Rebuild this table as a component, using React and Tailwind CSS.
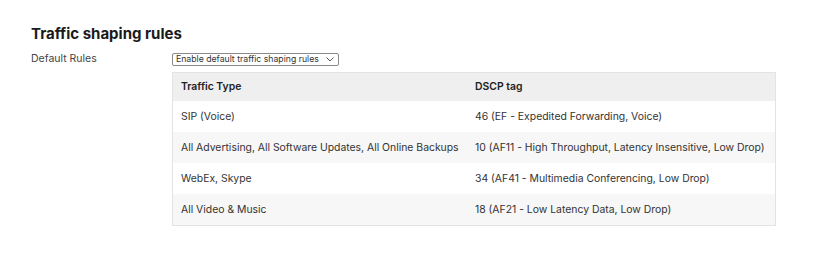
import React from 'react';

const rows = [
	['SIP (Voice)', '46 (EF - Expedited Forwarding, Voice)'],
	['All Advertising, All Software Updates, All Online Backups', '10 (AF11 - High Throughput, Latency Insensitive, Low Drop)'],
	['WebEx, Skype', '34 (AF41 - Multimedia Conferencing, Low Drop)'],
	['All Video & Music', '18 (AF21 - Low Latency Data, Low Drop)'],
];

export default function App() {
	return (
		<div className="w-[822px] h-[272px] bg-white pl-[31px] pt-[24px] text-[#222]" style={{ fontFamily: 'Inter, "Noto Sans", sans-serif' }}>
			<h2 className="text-[15px] font-bold leading-[20px] text-[#1a1a1a]">Traffic shaping rules</h2>
			<div className="flex mt-[8px]">
				<div className="w-[141px] text-[10.5px] leading-[14px] text-[#444]">Default Rules</div>
				<div>
					<div className="flex items-center h-[13px] w-[167px] border border-[#8a8a8a] rounded-[2px] pl-[3px] pr-[2px] text-[8.7px] text-[#333] mt-[1px]">
						<span className="flex-1 whitespace-nowrap">Enable default traffic shaping rules</span>
						<svg width="8" height="5" viewBox="0 0 8 5" className="mr-[2px] shrink-0">
							<path d="M0.5 0.5 L4 4 L7.5 0.5" fill="none" stroke="#444" strokeWidth="0.9" />
						</svg>
					</div>
					<div className="mt-[6px] w-[604px] border border-[#e3e3e3] text-[10.4px]">
						<div className="flex h-[28px] items-center bg-[#efefef] font-semibold text-[#222]">
							<div className="w-[302px] pl-[8px]">Traffic Type</div>
							<div className="flex-1">DSCP tag</div>
						</div>
						{rows.map((r, i) => (
							<div key={i} className={'flex h-[31px] items-center text-[#333] ' + (i % 2 === 1 ? 'bg-[#f7f7f7]' : 'bg-white')}>
								<div className="w-[302px] pl-[8px] whitespace-nowrap">{r[0]}</div>
								<div className="flex-1 whitespace-nowrap">{r[1]}</div>
							</div>
						))}
					</div>
				</div>
			</div>
		</div>
	);
}
